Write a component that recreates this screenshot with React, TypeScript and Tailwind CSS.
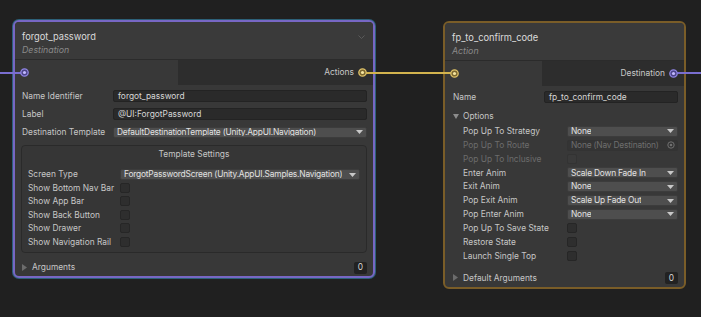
import React from "react";

const font = { fontFamily: "Inter, 'Noto Sans', sans-serif" };

function Port({ color }: { color: "purple" | "yellow" }) {
  const c =
    color === "purple"
      ? { ring: "#8f84e0", fill: "#4b4388", dot: "#c2b9ff" }
      : { ring: "#dcc068", fill: "#7a6630", dot: "#f6e6a0" };
  return (
    <svg width="9" height="9" viewBox="0 0 9 9" className="relative z-20 shrink-0">
      <circle cx="4.5" cy="4.5" r="3.7" fill={c.fill} stroke={c.ring} strokeWidth="1.3" />
      <circle cx="4.5" cy="4.5" r="1.6" fill={c.dot} />
    </svg>
  );
}

function Caret() {
  return (
    <svg width="7" height="4" viewBox="0 0 7 4" className="shrink-0">
      <path d="M0 0 L7 0 L3.5 4 Z" fill="#c8c8c8" />
    </svg>
  );
}

function Dropdown({ value, className = "" }: { value: string; className?: string }) {
  return (
    <div
      className={`flex h-[11px] min-w-0 items-center justify-between gap-[1px] rounded-[2px] border border-[#3c3c3c] bg-[#4e4e4e] pl-[3px] pr-[3px] tracking-[-0.2px] text-[#e2e2e2] ${className}`}
    >
      <span className="overflow-hidden">{value}</span>
      <Caret />
    </div>
  );
}

function Input({ value }: { value: string }) {
  return (
    <div className="flex h-[12px] flex-1 items-center rounded-[2px] border border-[#232323] bg-[#2a2a2a] pl-[4px] text-[#d6d6d6]">
      {value}
    </div>
  );
}

function Check({ dim = false }: { dim?: boolean }) {
  return (
    <div
      className={`h-[10px] w-[10px] rounded-[2px] border ${
        dim ? "border-[#333] bg-[#3a3a3a]" : "border-[#262626] bg-[#2e2e2e]"
      }`}
    />
  );
}

function Badge() {
  return (
    <div className="flex h-[12px] w-[13px] items-center justify-center rounded-[2px] bg-[#222] text-[#d4d4d4]">
      0
    </div>
  );
}

function Foldout({ open = false }: { open?: boolean }) {
  return open ? (
    <svg width="6" height="5" viewBox="0 0 6 5" className="shrink-0">
      <path d="M0 0 L6 0 L3 5 Z" fill="#8c8c8c" />
    </svg>
  ) : (
    <svg width="5" height="7" viewBox="0 0 5 7" className="shrink-0">
      <path d="M0 0 L5 3.5 L0 7 Z" fill="#6c6c6c" />
    </svg>
  );
}

function Header({ title, kind, chevron }: { title: string; kind: string; chevron?: boolean }) {
  return (
    <div className="flex h-[38px] shrink-0 justify-between border-b border-[#2b2b2b] bg-[#3a3a3a] pl-[7px] pr-[8px] pt-[8px]">
      <div>
        <div className="h-[13px] text-[9.3px] leading-[13px] text-[#dadada]">{title}</div>
        <div className="h-[13px] text-[8.8px] italic leading-[13px] text-[#8a8a8a]">{kind}</div>
      </div>
      {chevron && (
        <svg width="7" height="4" viewBox="0 0 7 4" className="mt-[5px]">
          <path d="M0.5 0.5 L3.5 3.5 L6.5 0.5" fill="none" stroke="#5a5a5a" strokeWidth="1" />
        </svg>
      )}
    </div>
  );
}

function PortRow({ split, left, right, rightLabel }: { split: number; left: "purple" | "yellow"; right: "purple" | "yellow"; rightLabel: string }) {
  return (
    <div className="flex h-[25px] shrink-0">
      <div className="flex items-center bg-[#383838] pl-[5px]" style={{ width: split }}>
        <Port color={left} />
      </div>
      <div className="flex flex-1 items-center justify-end gap-[4px] bg-[#2d2d2d] pr-[6px] text-[#c8c8c8]">
        <span>{rightLabel}</span>
        <Port color={right} />
      </div>
    </div>
  );
}

const checks = ["Show Bottom Nav Bar", "Show App Bar", "Show Back Button", "Show Drawer", "Show Navigation Rail"];

function DestinationNode() {
  return (
    <div className="absolute left-[13px] top-[20px] flex h-[258px] w-[362px] flex-col overflow-hidden rounded-[6px] border-2 border-[#7767c4] bg-[#383838] shadow-[0_0_0_1px_#2d6179]">
      <Header title="forgot_password" kind="Destination" chevron />
      <PortRow split={163} left="purple" right="yellow" rightLabel="Actions" />
      <div className="flex flex-1 flex-col pl-[7px] pr-[6px] pt-[2px] text-[#c6c6c6]">
        <div className="flex h-[18px] items-center">
          <span className="w-[91px] shrink-0">Name Identifier</span>
          <Input value="forgot_password" />
        </div>
        <div className="flex h-[18px] items-center">
          <span className="w-[91px] shrink-0">Label</span>
          <Input value="@UI:ForgotPassword" />
        </div>
        <div className="flex h-[18px] items-center">
          <span className="w-[91px] shrink-0">Destination Template</span>
          <Dropdown value="DefaultDestinationTemplate (Unity.AppUI.Navigation)" className="flex-1" />
        </div>
        <div className="ml-[-1px] mt-[4px] flex flex-col rounded-[4px] border border-[#2a2a2a] bg-[#363636] pb-[3px] pl-[6px] pr-[6px] pt-[2px]">
          <div className="h-[12px] text-center leading-[12px] text-[#c6c6c6]">Template Settings</div>
          <div className="mt-[8px] flex h-[13px] items-center">
            <span className="w-[92px] shrink-0">Screen Type</span>
            <Dropdown value="ForgotPasswordScreen (Unity.AppUI.Samples.Navigation)" className="flex-1" />
          </div>
          {checks.map((c) => (
            <div key={c} className="flex h-[13.5px] items-center">
              <span className="w-[92px] shrink-0">{c}</span>
              <Check />
            </div>
          ))}
        </div>
        <div className="mt-[7px] flex h-[16px] items-center">
          <Foldout />
          <span className="ml-[5px] flex-1">Arguments</span>
          <Badge />
        </div>
      </div>
    </div>
  );
}

type Opt = { label: string; kind: "drop" | "check" | "route"; value?: string; dim?: boolean };

const options: Opt[] = [
  { label: "Pop Up To Strategy", kind: "drop", value: "None" },
  { label: "Pop Up To Route", kind: "route", dim: true },
  { label: "Pop Up To Inclusive", kind: "check", dim: true },
  { label: "Enter Anim", kind: "drop", value: "Scale Down Fade In" },
  { label: "Exit Anim", kind: "drop", value: "None" },
  { label: "Pop Exit Anim", kind: "drop", value: "Scale Up Fade Out" },
  { label: "Pop Enter Anim", kind: "drop", value: "None" },
  { label: "Pop Up To Save State", kind: "check" },
  { label: "Restore State", kind: "check" },
  { label: "Launch Single Top", kind: "check" },
];

function ActionNode() {
  return (
    <div className="absolute left-[443px] top-[21px] flex h-[268px] w-[243px] flex-col overflow-hidden rounded-[6px] border-2 border-[#7a5d28] bg-[#383838]">
      <Header title="fp_to_confirm_code" kind="Action" />
      <PortRow split={97} left="yellow" right="purple" rightLabel="Destination" />
      <div className="flex flex-1 flex-col pl-[8px] pr-[6px] pt-[2px] text-[#c6c6c6]">
        <div className="flex h-[18px] items-center">
          <span className="w-[91px] shrink-0">Name</span>
          <Input value="fp_to_confirm_code" />
        </div>
        <div className="flex h-[18.4px] items-center pt-[3px]">
          <Foldout open />
          <span className="ml-[4px]">Options</span>
        </div>
        <div className="flex flex-col pl-[10px]">
          {options.map((o) => (
            <div key={o.label} className="flex h-[13.85px] items-center">
              <span className={`w-[104px] shrink-0 ${o.dim ? "text-[#6c6c6c]" : ""}`}>{o.label}</span>
              {o.kind === "drop" && <Dropdown value={o.value!} className="flex-1" />}
              {o.kind === "check" && <Check dim={o.dim} />}
              {o.kind === "route" && (
                <div className="flex h-[11px] min-w-0 flex-1 items-center justify-between rounded-[2px] border border-[#333] bg-[#343434] pl-[3px] pr-[2px] tracking-[-0.2px] text-[#6e6e6e]">
                  <span className="overflow-hidden">None (Nav Destination)</span>
                  <svg width="8" height="8" viewBox="0 0 8 8" className="shrink-0">
                    <circle cx="4" cy="4" r="3.2" fill="none" stroke="#707070" strokeWidth="1" />
                    <circle cx="4" cy="4" r="1.3" fill="#707070" />
                  </svg>
                </div>
              )}
            </div>
          ))}
        </div>
        <div className="mt-[7px] flex h-[16px] items-center">
          <Foldout />
          <span className="ml-[5px] flex-1">Default Arguments</span>
          <Badge />
        </div>
      </div>
    </div>
  );
}

export default function App() {
  return (
    <div
      className="relative h-[317px] w-[701px] overflow-hidden whitespace-nowrap bg-[#202020] text-[8.4px] leading-none"
      style={font}
    >
      <DestinationNode />
      <ActionNode />
      {/* wires */}
      <div className="absolute left-0 top-[72px] z-10 h-[2px] w-[24px] bg-[#7a6ed0]" />
      <div className="absolute left-[364px] top-[72px] z-10 h-[2px] w-[90px] bg-[#d2b34e]" />
      <div className="absolute left-[676px] top-[72px] z-10 h-[2px] w-[25px] bg-[#7a6ed0]" />
    </div>
  );
}
